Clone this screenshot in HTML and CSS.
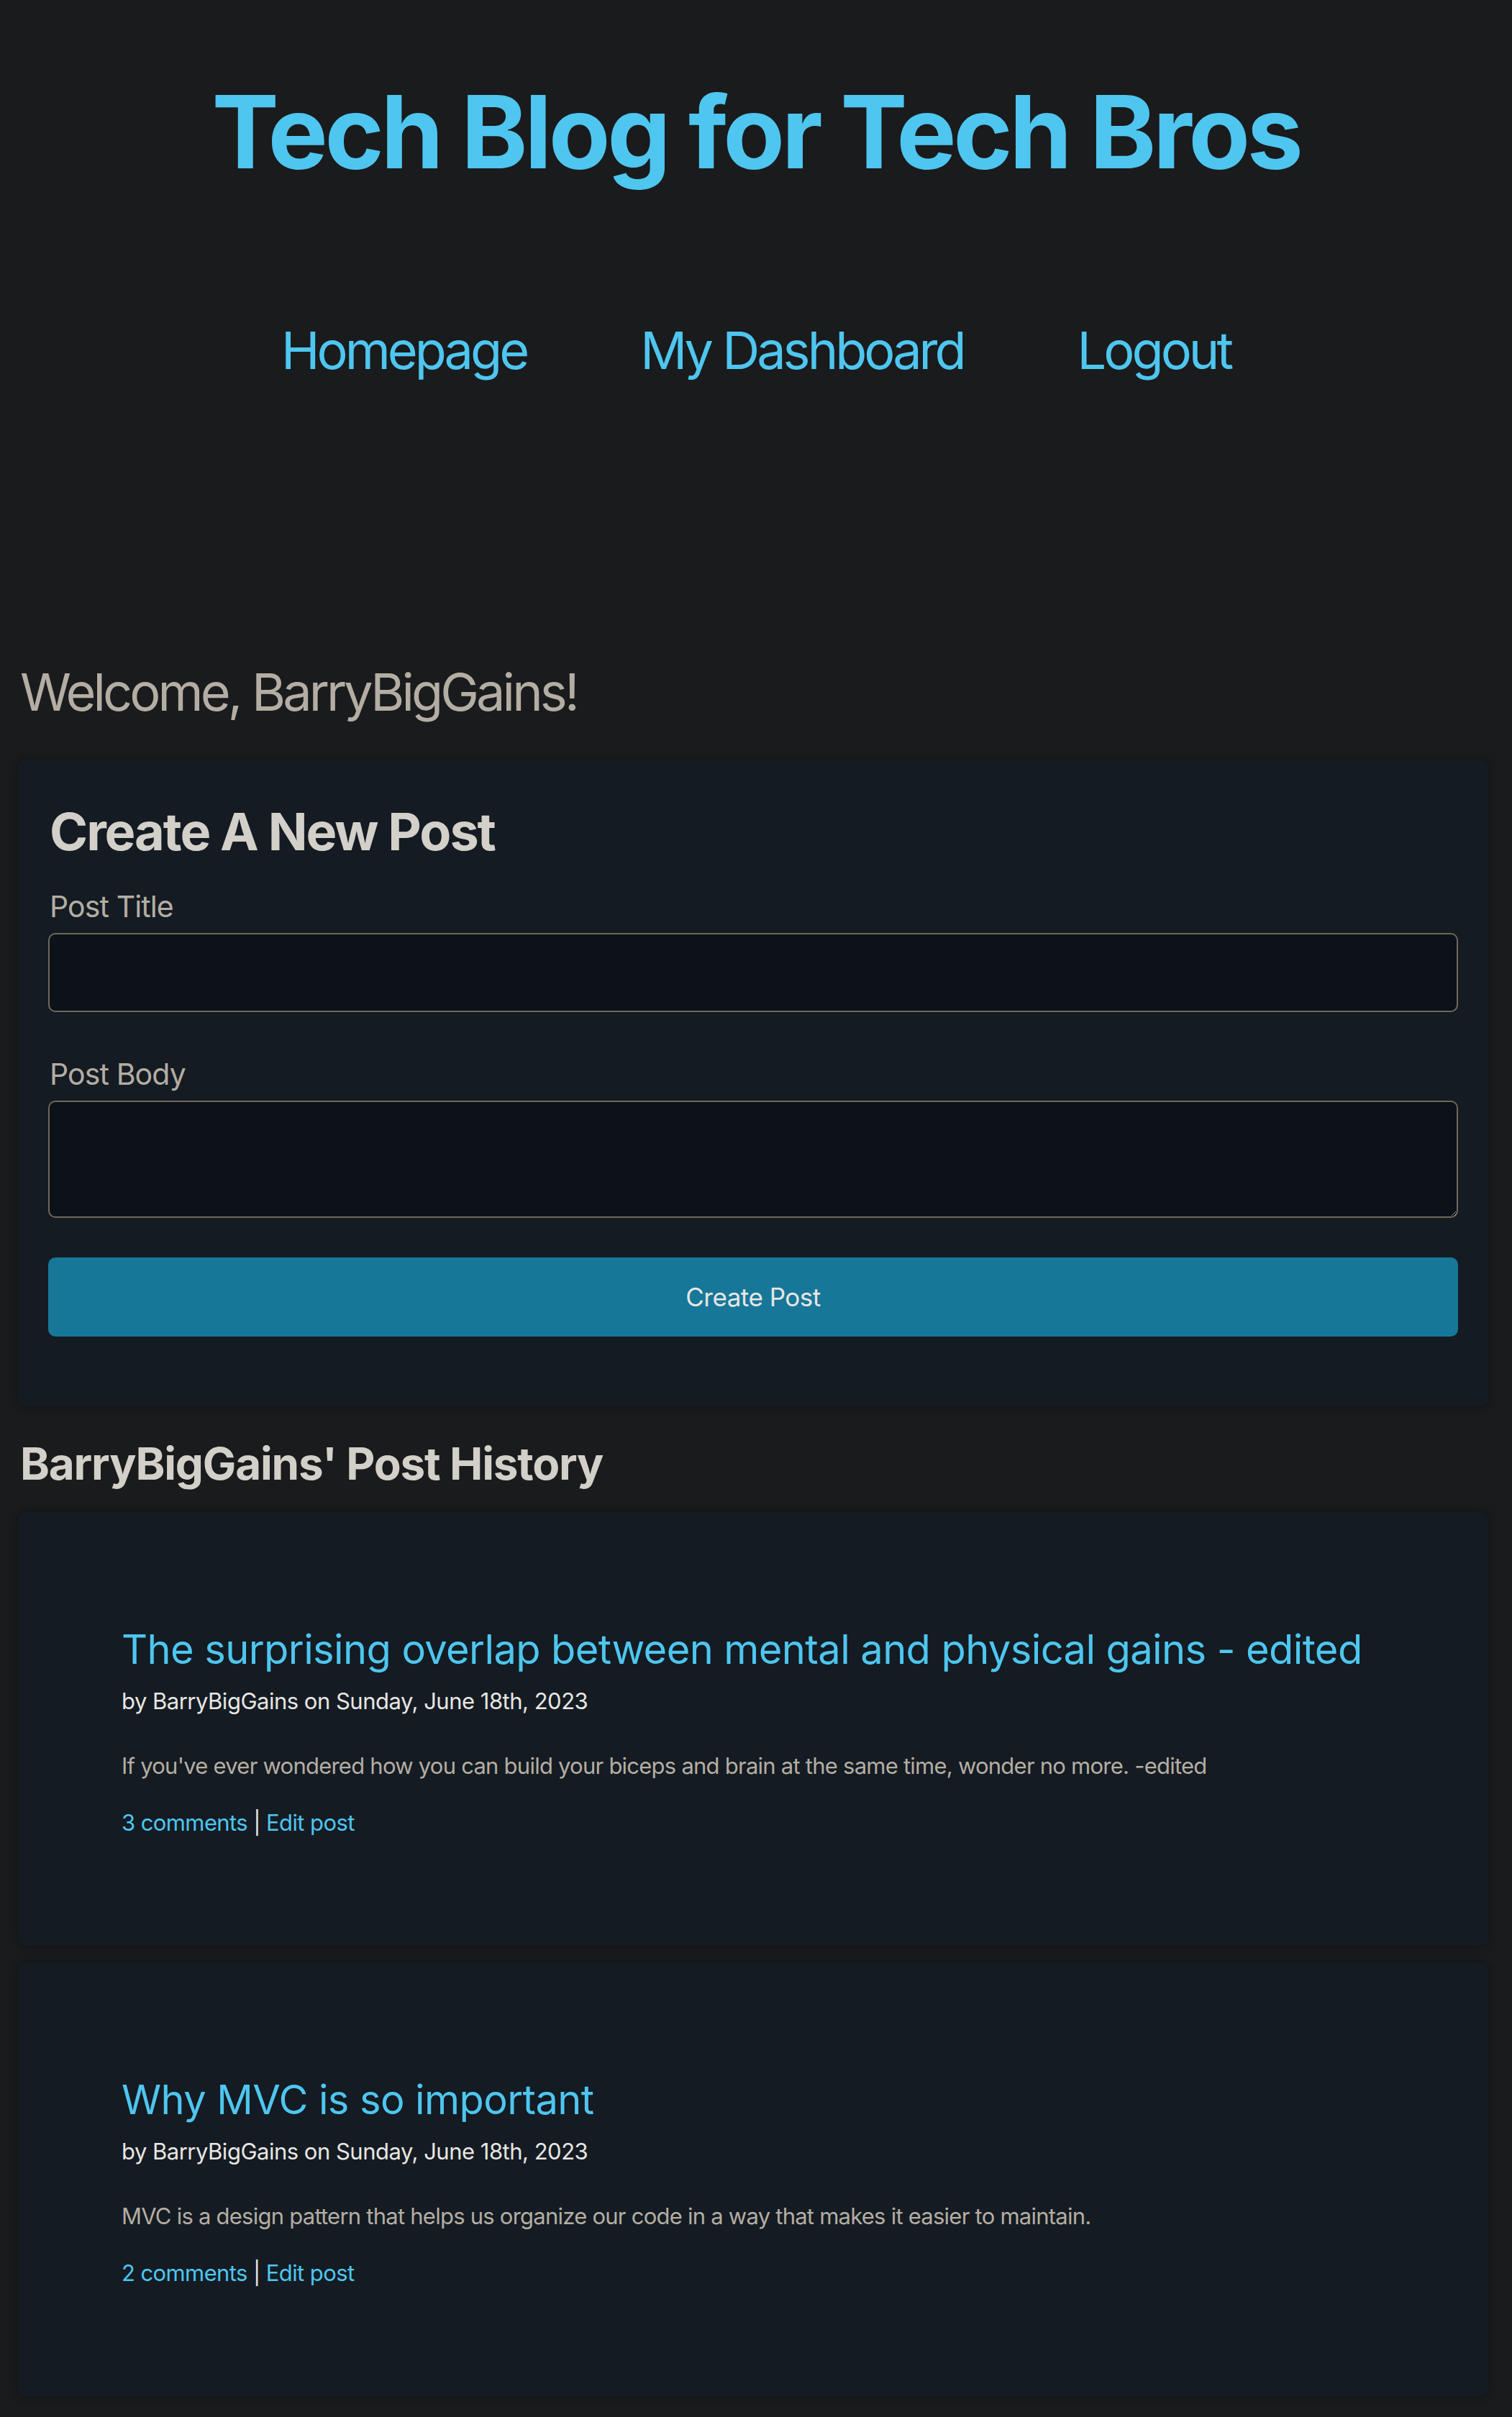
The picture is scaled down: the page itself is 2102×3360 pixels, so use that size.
FILE: index.html
```html
<!DOCTYPE html>
<html lang="en">
<head>
<meta charset="utf-8">
<title>Tech Blog for Tech Bros</title>
<link rel="stylesheet" href="styles.css">
</head>
<body>
<header class="site-header">
  <h1 class="site-title">Tech Blog for Tech Bros</h1>
  <nav class="site-nav">
    <a href="#">Homepage</a>
    <a href="#">My Dashboard</a>
    <a href="#">Logout</a>
  </nav>
</header>
<main class="page">
  <h2 class="welcome">Welcome, BarryBigGains!</h2>
  <section class="card form-card">
    <h2 class="form-title">Create A New Post</h2>
    <label class="field-label" for="post-title">Post Title</label>
    <input class="field-input" id="post-title" type="text">
    <label class="field-label body-label" for="post-body">Post Body</label>
    <textarea class="field-input field-area" id="post-body"></textarea>
    <button class="btn-create" type="button">Create Post</button>
  </section>
  <h3 class="history-title">BarryBigGains' Post History</h3>
  <article class="card post-card">
    <h4 class="post-title"><a href="#">The surprising overlap between mental and physical gains - edited</a></h4>
    <p class="post-meta">by BarryBigGains on Sunday, June 18th, 2023</p>
    <p class="post-body">If you've ever wondered how you can build your biceps and brain at the same time, wonder no more. -edited</p>
    <p class="post-links"><a href="#">3 comments</a> | <a href="#">Edit post</a></p>
  </article>
  <article class="card post-card">
    <h4 class="post-title"><a href="#">Why MVC is so important</a></h4>
    <p class="post-meta">by BarryBigGains on Sunday, June 18th, 2023</p>
    <p class="post-body">MVC is a design pattern that helps us organize our code in a way that makes it easier to maintain.</p>
    <p class="post-links"><a href="#">2 comments</a> | <a href="#">Edit post</a></p>
  </article>
</main>
</body>
</html>
```
FILE: styles.css
```css
html, body {
  margin: 0;
  padding: 0;
}
body {
  background: #1a1b1d;
  font-family: Inter, "Noto Sans", "Liberation Sans", sans-serif;
  color: #e8e6e3;
  color-scheme: dark;
}
a {
  color: #4ec6ef;
  text-decoration: none;
}
.site-header {
  display: flex;
  flex-direction: column;
  align-items: center;
  padding-top: 99px;
}
.site-title {
  margin: 0;
  font-size: 140px;
  line-height: 1.2;
  font-weight: 700;
  color: #4ec6ef;
  letter-spacing: -4.4px;
}
.site-nav {
  display: flex;
  gap: 158px;
  margin-top: 166px;
  font-size: 72px;
  line-height: 1.5;
  letter-spacing: -4px;
}
.page {
  padding: 0 33px 27px 25px;
}
.welcome {
  margin: 378px 0 0 3px;
  font-size: 72px;
  line-height: 1.2;
  font-weight: 400;
  color: #b4ada3;
  letter-spacing: -3.9px;
}
.card {
  background: #141b22;
  border-radius: 10px;
  box-shadow: 0 0 12px rgba(0, 0, 0, 0.35);
}
.form-card {
  margin-top: 51px;
  padding: 57px 42px 97px;
  display: flex;
  flex-direction: column;
}
.form-title {
  margin: 0 0 30px 2px;
  font-size: 72px;
  line-height: 1.2;
  font-weight: 700;
  color: #d3cfc9;
  letter-spacing: -2.1px;
}
.field-label {
  font-size: 41px;
  line-height: 1.5;
  color: #b4ada3;
  margin: 0 0 6px 2px;
  letter-spacing: -0.9px;
}
.body-label {
  margin-top: 56px;
  margin-bottom: 5px;
}
.field-input {
  box-sizing: border-box;
  height: 110px;
  background: #0d1219;
  border: 2px solid #6f685c;
  border-radius: 10px;
  color: #e8e6e3;
  font: inherit;
  font-size: 36px;
  padding: 10px 20px;
  margin: 0;
}
.field-area {
  height: 163px;
  resize: vertical;
}
.btn-create {
  margin-top: 55px;
  height: 110px;
  border: 0;
  border-radius: 10px;
  background: #177799;
  color: #e8e6e3;
  font-family: inherit;
  font-size: 35px;
  letter-spacing: -0.5px;
}
.history-title {
  margin: 43px 0 30px 3px;
  font-size: 62px;
  line-height: 1.2;
  font-weight: 700;
  color: #d3cfc9;
  letter-spacing: -1.2px;
}
.post-card {
  padding: 158px 144px 147px;
  margin-bottom: 23px;
}
.post-card:last-child {
  margin-bottom: 0;
}
.post-title {
  margin: 0;
  font-size: 56px;
  line-height: 1.2;
  font-weight: 400;
  letter-spacing: -0.6px;
}
.post-meta {
  margin: 15px 0 0;
  font-size: 31px;
  line-height: 1.5;
  color: #e8e6e3;
  letter-spacing: -0.5px;
}
.post-body {
  margin: 43px 0 0;
  font-size: 31px;
  line-height: 1.5;
  color: #b4ada3;
  letter-spacing: -0.76px;
}
.post-links {
  margin: 33px 0 0;
  font-size: 31px;
  line-height: 1.5;
  color: #e8e6e3;
  letter-spacing: -0.6px;
}
```
